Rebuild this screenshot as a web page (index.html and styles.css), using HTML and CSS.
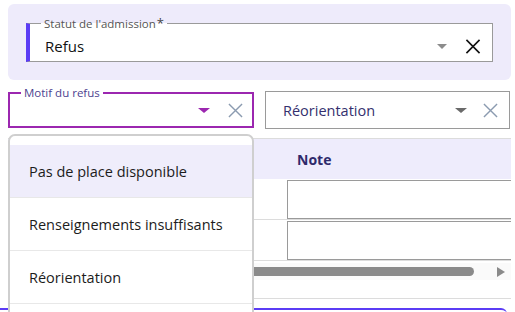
FILE: index.html
```html
<!DOCTYPE html>
<html lang="fr">
<head>
<meta charset="UTF-8">
<title>Admission</title>
<meta name="viewport" content="width=device-width, initial-scale=1">
<link rel="stylesheet" href="styles.css">
</head>
<body>
<div class="page">
  <div class="status-panel">
    <fieldset class="field field-status">
      <legend>Statut de l'admission<span class="req">*</span></legend>
      <div class="field-row">
        <span class="field-value">Refus</span>
        <span class="caret"></span>
        <svg class="clear clear-dark" viewBox="0 0 16 16"><path d="M1 1L15 15M15 1L1 15"/></svg>
      </div>
    </fieldset>
  </div>

  <div class="select-row">
    <div class="motif-wrap">
      <fieldset class="field field-motif">
        <legend>Motif du refus</legend>
        <div class="field-row">
          <span class="field-value"></span>
          <span class="caret caret-purple"></span>
          <svg class="clear" viewBox="0 0 16 16"><path d="M1 1L15 15M15 1L1 15"/></svg>
        </div>
      </fieldset>

      <!-- open dropdown -->
      <ul class="menu">
        <li class="active">Pas de place disponible</li>
        <li>Renseignements insuffisants</li>
        <li>Réorientation</li>
      </ul>
    </div>

    <div class="select">
      <span class="select-value">Réorientation</span>
      <span class="caret caret-dark"></span>
      <svg class="clear" viewBox="0 0 16 16"><path d="M1 1L15 15M15 1L1 15"/></svg>
    </div>
  </div>

  <div class="grid-wrap">
    <div class="grid">
      <div class="cell head"></div>
      <div class="cell head">Note</div>
      <div class="cell"></div>
      <div class="cell"><div class="note-input"></div></div>
      <div class="cell"></div>
      <div class="cell"><div class="note-input"></div></div>
    </div>
    <div class="scrollbar">
      <div class="thumb"></div>
      <span class="arrow"></span>
    </div>
    <div class="grid-foot"></div>
  </div>

  <div class="next-panel"></div>
</div>
</body>
</html>
```

FILE: styles.css
```css
body {
  margin: 0;
  font-family: "Open Sans", "Noto Sans", sans-serif;
  background: #fff;
  overflow: hidden;
}

.page {
  padding: 4px 4px 0 8px;
}

.status-panel {
  background: #eeebfb;
  border-radius: 6px;
  height: 76px;
  box-sizing: border-box;
  padding: 12px 18px 0 18px;
}

.field {
  margin: 0;
  padding: 0 11px 0 15px;
  border: 1px solid #9a9a9a;
  background: #fff;
  min-width: 0;
}
.field legend {
  font-size: 11.5px;
  line-height: 14px;
  color: #555;
  padding: 0 3px;
  margin-left: -4px;
}
.field .req {
  font-size: 13px;
  color: #444;
  margin-left: 1px;
}
.field-status {
  border-left: 4px solid #5b3cf5;
}
.field-row {
  display: flex;
  align-items: center;
  height: 30px;
}
.field-value {
  flex: 1;
  font-size: 15px;
  color: #111;
}

.caret {
  width: 0;
  height: 0;
  border-left: 5px solid transparent;
  border-right: 5px solid transparent;
  border-top: 5px solid #8c8c8c;
  margin-right: 18px;
}
.caret-purple {
  border-left-width: 6px;
  border-right-width: 6px;
  border-top-color: #9c27b0;
}
.caret-dark {
  border-left-width: 6px;
  border-right-width: 6px;
  border-top-color: #6a6a6a;
}

.clear {
  width: 15px;
  height: 15px;
  stroke: #8b9bb0;
  stroke-width: 1.5;
  fill: none;
}
.clear-dark {
  width: 16px;
  height: 15px;
  stroke: #111;
  stroke-width: 1.7;
}

.select-row {
  display: flex;
  align-items: flex-end;
  gap: 11px;
  margin-top: 6px;
  margin-right: 1px;
}

.motif-wrap {
  position: relative;
  width: 246px;
}
.field-motif {
  border: 2px solid #9c27b0;
  padding: 0 9px 0 15px;
}
.field-motif legend {
  color: #4d3f8f;
  font-size: 11.5px;
}
.field-motif .field-row {
  height: 26px;
  box-sizing: border-box;
  padding-bottom: 5px;
}
.field-motif .caret {
  margin-right: 18px;
}

.select {
  flex: 1;
  height: 38px;
  box-sizing: border-box;
  border: 1px solid #9a9a9a;
  display: flex;
  align-items: center;
  padding: 0 11px 0 17px;
  margin-bottom: -1px;
}
.select-value {
  flex: 1;
  font-size: 14.5px;
  color: #34306e;
}
.select .caret {
  margin-right: 16px;
}

.menu {
  position: absolute;
  left: 0;
  top: calc(100% + 6px);
  width: 246px;
  box-sizing: border-box;
  margin: 0;
  padding: 9px 0 40px;
  list-style: none;
  background: #fff;
  border: 2px solid #cfcfcf;
  border-radius: 7px;
  z-index: 10;
}
.menu li {
  height: 53px;
  box-sizing: border-box;
  display: flex;
  align-items: center;
  padding-left: 19px;
  font-size: 14.5px;
  color: #1c1c1c;
  border-bottom: 1px solid #e8e8e8;
}
.menu li.active {
  background: #efedfb;
}

.grid-wrap {
  margin-top: 10px;
  overflow: hidden;
}
.grid {
  display: grid;
  grid-template-columns: 279px 320px;
  border-top: 1px solid #dcdcdc;
}
.cell {
  height: 41px;
  border-bottom: 1px solid #dcdcdc;
  box-sizing: border-box;
  padding: 1px 0 0;
}
.cell.head {
  height: 40px;
  background: #eeecfc;
  font-weight: 700;
  font-size: 14px;
  color: #2e2a6b;
  display: flex;
  align-items: center;
  padding: 0 10px;
  border-bottom: 0;
}
.note-input {
  height: 39px;
  box-sizing: border-box;
  border: 1px solid #9a9a9a;
  border-right: 0;
}

.scrollbar {
  display: flex;
  align-items: center;
  height: 17px;
  margin-top: 2px;
  background: #fafafa;
}
.thumb {
  width: 466px;
  height: 9px;
  background: #8a8a8a;
  border-radius: 5px;
}
.arrow {
  margin-left: 23px;
  width: 0;
  height: 0;
  border-top: 5px solid transparent;
  border-bottom: 5px solid transparent;
  border-left: 8px solid #8a8a8a;
}
.grid-foot {
  height: 18px;
  border-bottom: 1px solid #dcdcdc;
}

.next-panel {
  margin: 9px 4px 0 -8px;
  height: 20px;
  border-top: 2px solid #5b3cf5;
  border-top-right-radius: 6px;
}
```
